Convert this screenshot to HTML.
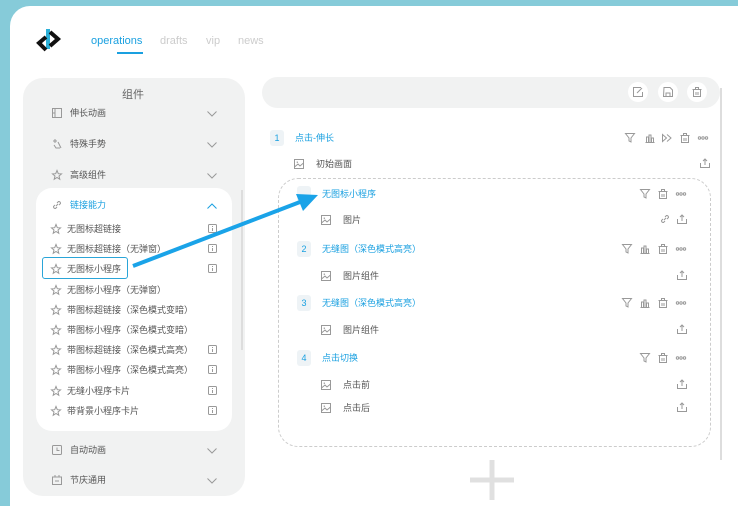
<!DOCTYPE html>
<html><head><meta charset="utf-8"><style>
*{margin:0;padding:0;box-sizing:border-box}
body{width:738px;height:500px;overflow:hidden;background:#86cbd9;font-family:"Liberation Sans","Noto Sans CJK SC",sans-serif;position:relative}
.card{position:absolute;left:10px;top:6px;width:740px;height:500px;background:#fff;border-radius:20px 0 0 0}
.a{position:absolute;white-space:nowrap}
.t{font-size:9px;line-height:12px;color:#555}
.b{color:#1aa0e0}
svg{position:absolute;overflow:visible}
.ic{stroke:#999;fill:none;stroke-width:1}
</style></head><body>
<div class="card"></div>
<svg style="left:36px;top:27px" width="26" height="26" viewBox="0 0 26 26">
<path d="M12 2 L12 22" stroke="#2bb0d8" stroke-width="4"/>
<path d="M14 5 L22 12 L14 19" stroke="#111" stroke-width="4" fill="none"/>
<path d="M10 10 L3 16 L10 23" stroke="#111" stroke-width="4" fill="none"/>
</svg>
<div class="a" style="left:91px;top:35px;font-size:11px;color:#1aa0e0">operations</div>
<div class="a" style="left:117px;top:52px;width:26px;height:1.5px;background:#1aa0e0"></div>
<div class="a" style="left:160px;top:35px;font-size:11px;color:#ccc">drafts</div>
<div class="a" style="left:206px;top:35px;font-size:11px;color:#ccc">vip</div>
<div class="a" style="left:238px;top:35px;font-size:11px;color:#ccc">news</div>

<div class="a" style="left:23px;top:78px;width:222px;height:418px;background:#f1f2f2;border-radius:20px"></div>
<div class="a" style="left:36px;top:188px;width:196px;height:243px;background:#fff;border-radius:16px"></div>
<div class="a" style="left:241px;top:190px;width:2px;height:160px;background:#ddd"></div>
<div class="a" style="left:122px;top:86px;font-size:11px;color:#666">组件</div>

<div class="a t" style="left:70px;top:107px">伸长动画</div>
<div class="a t" style="left:70px;top:138px">特殊手势</div>
<div class="a t" style="left:70px;top:169px">高级组件</div>
<div class="a t b" style="left:70px;top:199px">链接能力</div>
<div class="a t" style="left:70px;top:444px">自动动画</div>
<div class="a t" style="left:70px;top:474px">节庆通用</div>
<svg style="left:52px;top:108px" width="10" height="10"><rect x="0.5" y="0.5" width="9" height="9" class="ic"/><path d="M3 .5V9.5M.5 5H3" class="ic"/></svg>
<svg style="left:52px;top:139px" width="10" height="10"><path d="M1 2H5M3 0V4M6 3L9 9M2 6L4 9L8 9" class="ic"/></svg>
<svg style="left:52px;top:170px" width="10" height="10"><path d="M5 .5L6.3 3.7 9.5 3.9 7 6 7.8 9.3 5 7.5 2.2 9.3 3 6 .5 3.9 3.7 3.7Z" class="ic"/></svg>
<svg style="left:52px;top:200px" width="10" height="10"><path d="M4 6L6 4M3 5L1.5 6.5A1.8 1.8 0 0 0 3.5 8.5L5 7M5 3L6.5 1.5A1.8 1.8 0 0 1 8.5 3.5L7 5" class="ic"/></svg>
<svg style="left:52px;top:445px" width="10" height="10"><rect x="0.5" y="0.5" width="9" height="9" rx="1" class="ic"/><path d="M5 2.5V5.5H7.5" class="ic"/></svg>
<svg style="left:52px;top:475px" width="10" height="10"><rect x="0.5" y="2" width="9" height="7.5" class="ic"/><path d="M3 0V2M7 0V2M3 6H7" class="ic"/></svg>
<svg style="left:207px;top:111px" width="10" height="6"><path d="M.5 .5L5 5 9.5 .5" class="ic"/></svg>
<svg style="left:207px;top:142px" width="10" height="6"><path d="M.5 .5L5 5 9.5 .5" class="ic"/></svg>
<svg style="left:207px;top:173px" width="10" height="6"><path d="M.5 .5L5 5 9.5 .5" class="ic"/></svg>
<svg style="left:207px;top:203px" width="10" height="6"><path d="M.5 5.5L5 1 9.5 5.5" stroke="#1aa0e0" fill="none"/></svg>
<svg style="left:207px;top:448px" width="10" height="6"><path d="M.5 .5L5 5 9.5 .5" class="ic"/></svg>
<svg style="left:207px;top:478px" width="10" height="6"><path d="M.5 .5L5 5 9.5 .5" class="ic"/></svg>

<div id="list"></div>
<div class="a" style="left:42px;top:257px;width:86px;height:22px;border:1.5px solid #2aa5d8;border-radius:3px"></div>

<div class="a" style="left:262px;top:77px;width:458px;height:31px;background:#f1f2f2;border-radius:16px"></div>
<div class="a" style="left:720px;top:88px;width:1.5px;height:372px;background:#ddd"></div>
<div class="a" style="left:628px;top:82px;width:20px;height:20px;border-radius:50%;background:#fff"></div>
<div class="a" style="left:658px;top:82px;width:20px;height:20px;border-radius:50%;background:#fff"></div>
<div class="a" style="left:687px;top:82px;width:20px;height:20px;border-radius:50%;background:#fff"></div>
<svg style="left:633px;top:87px" width="10" height="10"><path d="M8 .5H.5V9.5H9.5V5M4 6L9 1" class="ic"/></svg>
<svg style="left:663px;top:87px" width="10" height="10"><path d="M1 .5H7L9.5 3V9.5H.5Z M3 9.5V6H7V9.5" class="ic"/></svg>
<svg style="left:692px;top:87px" width="10" height="10"><path d="M.5 2.5H9.5M3.5 2.5V.5H6.5V2.5M1.5 2.5V9.5H8.5V2.5M4 5V8M6 5V8" class="ic"/></svg>

<div class="a" style="left:278px;top:178px;width:433px;height:269px;border:1px dashed #ccc;border-radius:20px"></div>
<div id="right"></div>

<svg style="left:470px;top:460px" width="44" height="40"><path d="M22 0V40M0 20H44" stroke="#e0e0e0" stroke-width="5"/></svg>

<svg style="left:0;top:0" width="738" height="500"><path d="M133 266 L300 202" stroke="#1aa3e8" stroke-width="4"/><path d="M318 195 L296 194 L303 211 Z" fill="#1aa3e8"/></svg>

<script>
var L=document.getElementById('list'),h='';
var items=[["无图标超链接",1],["无图标超链接（无弹窗）",1],["无图标小程序",1],["无图标小程序（无弹窗）",0],["带图标超链接（深色模式变暗）",0],["带图标小程序（深色模式变暗）",0],["带图标超链接（深色模式高亮）",1],["带图标小程序（深色模式高亮）",1],["无缝小程序卡片",1],["带背景小程序卡片",1]];
items.forEach(function(it,i){var y=229+i*20.2;
h+='<svg style="left:51px;top:'+(y-5)+'px" width="10" height="10"><path d="M5 .5L6.3 3.7 9.5 3.9 7 6 7.8 9.3 5 7.5 2.2 9.3 3 6 .5 3.9 3.7 3.7Z" class="ic"/></svg>';
h+='<div class="a t" style="left:67px;top:'+(y-6)+'px">'+it[0]+'</div>';
if(it[1])h+='<svg style="left:208px;top:'+(y-5)+'px" width="9" height="9"><rect x=".5" y=".5" width="8" height="8" rx="1" class="ic"/><path d="M4.5 2V3M4.5 4V7" class="ic"/></svg>';});
L.innerHTML=h;
var R=document.getElementById('right'),r='';
function grp(y,x,n,t,icons){r+='<div class="a" style="left:'+x+'px;top:'+(y-8)+'px;width:14px;height:16px;background:#eef3f6;border-radius:3px;font-size:9px;color:#1aa0e0;text-align:center;line-height:16px">'+n+'</div>';
r+='<div class="a t b" style="left:'+(x+25)+'px;top:'+(y-6)+'px">'+t+'</div>';
icons.forEach(function(k){var ix=k[0],s=k[1],p;
if(s=='f')p='<path d="M.5 .5H9.5L6 5V9L4 8V5Z" class="ic"/>';
if(s=='c')p='<path d="M.5 9.5H9.5M1.5 9V4H3.5V9M4 9V2H6V9M6.5 9V5H8.5V9" class="ic"/>';
if(s=='p')p='<path d="M.5 1.5L4.5 5 .5 8.5ZM5 1.5L9 5 5 8.5" class="ic"/>';
if(s=='d')p='<path d="M.5 2.5H9.5M3.5 2.5V.5H6.5V2.5M1.5 2.5V9.5H8.5V2.5M4 5V8M6 5V8" class="ic"/>';
if(s=='m')p='<circle cx="1.5" cy="5" r="1.2" class="ic"/><circle cx="5" cy="5" r="1.2" class="ic"/><circle cx="8.5" cy="5" r="1.2" class="ic"/>';
r+='<svg style="left:'+ix+'px;top:'+(y-5)+'px" width="10" height="10">'+p+'</svg>';});}
function item(y,x,t,icons){r+='<svg style="left:'+x+'px;top:'+(y-5)+'px" width="10" height="10"><rect x=".5" y=".5" width="9" height="9" class="ic"/><path d="M.5 8L4 5 6 7 9.5 4M3 3.3A.3.3 0 1 0 3 3.2" class="ic"/></svg>';
r+='<div class="a t" style="left:'+(x+22)+'px;top:'+(y-6)+'px">'+t+'</div>';
icons.forEach(function(k){var p=k[1]=='u'?'<path d="M.5 5V9.5H9.5V5M5 7V1M3 3L5 1 7 3" class="ic"/>':'<path d="M4 6L6 4M3 5L1.5 6.5A1.8 1.8 0 0 0 3.5 8.5L5 7M5 3L6.5 1.5A1.8 1.8 0 0 1 8.5 3.5L7 5" class="ic"/>';
r+='<svg style="left:'+k[0]+'px;top:'+(y-6)+'px" width="10" height="10">'+p+'</svg>';});}
grp(138,270,'1','点击-伸长',[[625,'f'],[645,'c'],[662,'p'],[680,'d'],[698,'m']]);
item(164,294,'初始画面',[[700,'u']]);
grp(194,297,'','无图标小程序',[[640,'f'],[658,'d'],[676,'m']]);
item(220,321,'图片',[[660,'l'],[677,'u']]);
grp(249,297,'2','无缝图（深色模式高亮）',[[622,'f'],[640,'c'],[658,'d'],[676,'m']]);
item(276,321,'图片组件',[[677,'u']]);
grp(303,297,'3','无缝图（深色模式高亮）',[[622,'f'],[640,'c'],[658,'d'],[676,'m']]);
item(330,321,'图片组件',[[677,'u']]);
grp(358,297,'4','点击切换',[[640,'f'],[658,'d'],[676,'m']]);
item(385,321,'点击前',[[677,'u']]);
item(408,321,'点击后',[[677,'u']]);
R.innerHTML=r;
</script>
</body></html>
